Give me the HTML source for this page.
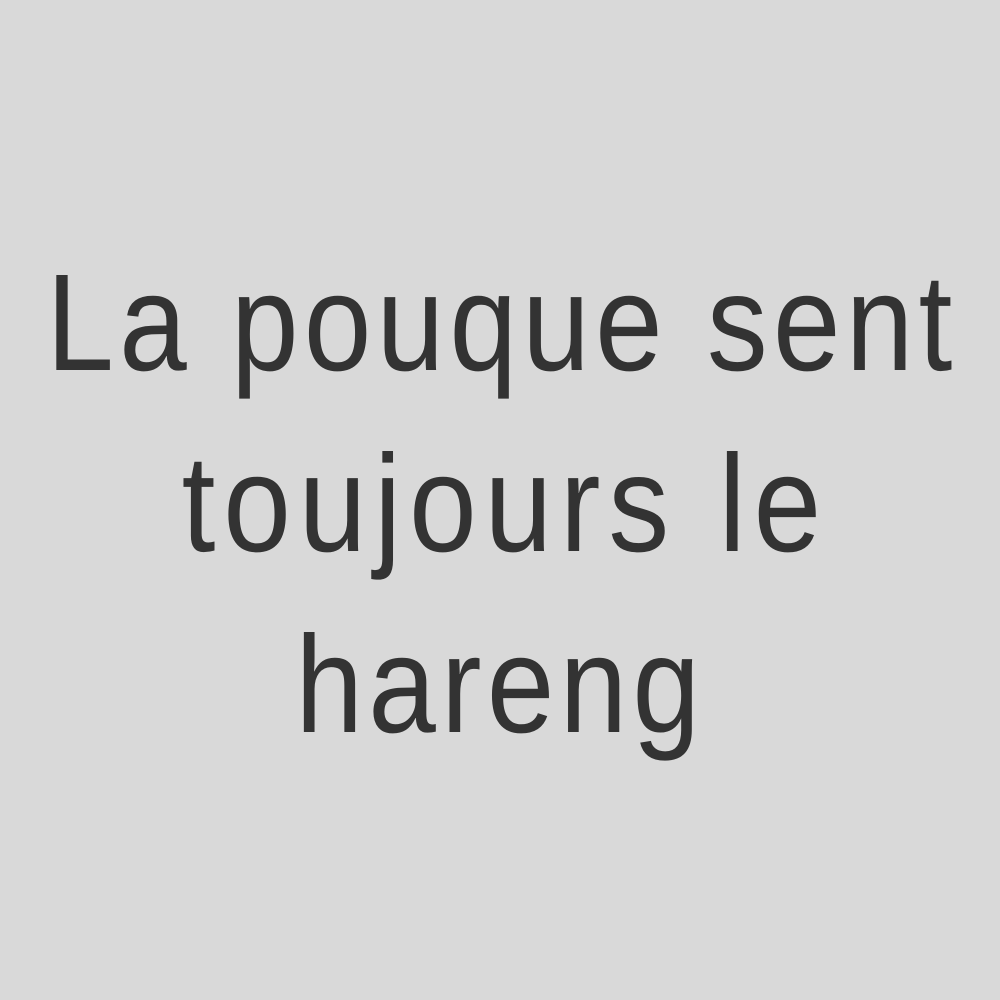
<!DOCTYPE html>
<html><head><style>
html,body{margin:0;padding:0;}
body{width:1000px;height:1000px;background:#d9d9d9;position:relative;overflow:hidden;}
.t{position:absolute;left:-10px;width:1000px;text-align:center;font-family:"Liberation Sans",sans-serif;font-size:138px;line-height:180px;color:#333;letter-spacing:6px;white-space:nowrap;transform:scaleX(0.88);transform-origin:503px 0;}
</style></head><body>
<div class="t" style="top:233px;left:-14px">La pouque sent</div>
<div class="t" style="top:414px;letter-spacing:9px;left:5px">toujours le</div>
<div class="t" style="top:595px;left:0px">hareng</div>
</body></html>
